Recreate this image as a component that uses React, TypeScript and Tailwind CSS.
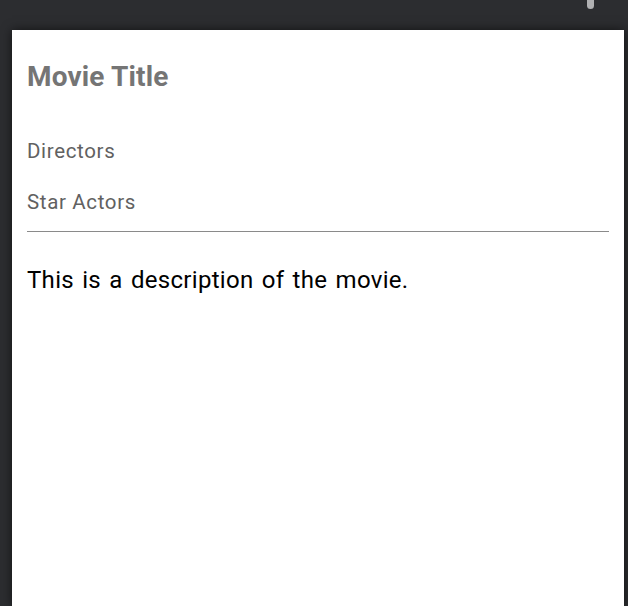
import React from "react";

export default function App() {
  return (
    <div className="relative w-[628px] h-[606px] overflow-hidden bg-[#2c2d30]" style={{ fontFamily: "Roboto, 'Noto Sans', sans-serif" }}>
      <div className="absolute left-[587px] top-[-6px] w-[7px] h-[15px] rounded-full bg-[#b0b0b2]" />
      <div className="flex pt-[30px] pl-[12px] pr-[4px] h-full">
        <div className="flex-1 bg-white shadow-[0_0_10px_rgba(0,0,0,0.6)] px-[15px] pt-[31px]">
          <h1 className="text-[28px] leading-[32px] font-bold tracking-[0.15px] text-[#757575]">Movie Title</h1>
          <p className="mt-[46px] text-[20.5px] leading-[24px] tracking-[0.65px] text-[#616161]">Directors</p>
          <p className="mt-[27px] text-[20.5px] leading-[24px] tracking-[0.65px] text-[#616161]">Star Actors</p>
          <div className="mt-[17px] h-px bg-[#8a8a8a]" />
          <p className="mt-[34px] text-[24px] leading-[28px] tracking-[0.3px] [word-spacing:2px] text-black">This is a description of the movie.</p>
        </div>
      </div>
    </div>
  );
}
